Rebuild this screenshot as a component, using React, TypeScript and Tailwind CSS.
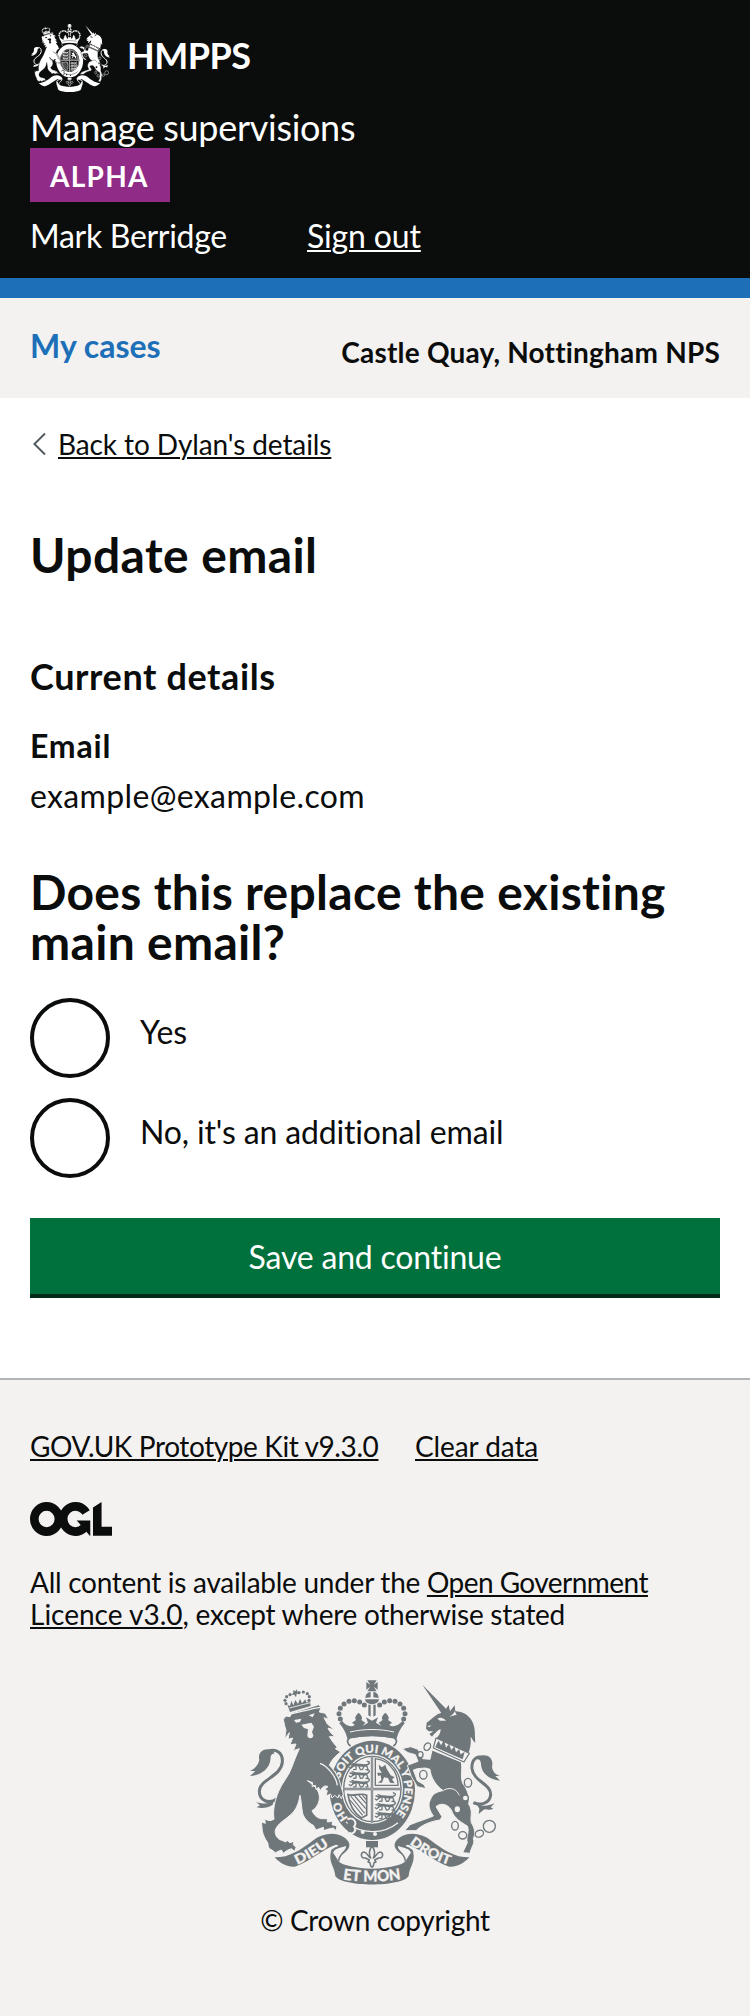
import React from "react";

type CrestProps = { ink: string; ground: string; motto: boolean; className: string; viewBox: string };

const LION =
  "M130 148 L138 138 L150 140 C152 130 160 126 172 124 L236 104 L243 112 L238 126 L256 130 L266 148 L252 143 L262 162 L284 180 L264 174 C268 184 274 192 286 200 L268 200 L280 218 L292 232 L286 236 L302 246 C288 256 274 270 268 286 C284 302 298 326 301 342 L310 372 L304 386 L297 374 L294 384 L284 376 L276 384 L272 372 L258 378 L262 362 L254 358 L264 350 C254 344 246 352 240 362 L236 352 L228 358 L226 346 L216 350 L218 338 L202 332 C222 346 240 360 238 386 C236 404 226 416 216 422 C222 436 232 444 244 446 L262 446 L262 456 L278 454 L276 464 L291 468 L288 482 L280 474 L262 478 L252 482 L250 472 L228 480 L220 466 C208 460 192 446 188 430 C184 410 184 392 180 376 C176 398 170 420 150 436 C134 450 112 462 106 480 C104 494 110 502 118 508 L138 516 L140 510 L150 518 L162 514 L160 524 L168 532 L164 544 L154 536 L140 542 L130 550 L124 540 L106 548 L96 540 C84 536 84 526 84 520 C72 502 66 488 66 472 L64 456 L76 460 L74 448 L90 452 L102 448 C98 420 104 392 116 364 C126 338 146 320 156 290 C164 268 172 250 178 236 L160 242 L168 222 L150 224 L158 204 L144 208 L148 188 L134 206 L138 180 L134 168 Z";

const UNICORN =
  "M560 158 C574 148 584 138 594 132 L612 126 L626 104 L630 124 L644 106 L646 124 C672 124 692 140 700 162 C706 178 704 192 706 218 C698 212 696 204 692 200 C694 222 690 238 684 252 L588 206 C596 198 602 190 602 178 C592 180 586 190 576 200 L568 192 L580 184 L566 184 L558 176 Z";

const UNICORN_BODY =
  "M576 240 L664 276 C668 300 660 318 668 340 C684 360 690 384 686 402 C700 424 690 438 694 458 C706 476 706 494 700 506 C706 520 694 530 690 550 L668 548 L682 518 C676 502 690 486 682 468 C666 458 642 446 634 420 C620 398 598 400 588 410 L606 440 L600 450 C572 454 546 464 528 482 L494 482 L510 464 C536 454 562 446 580 438 C568 420 562 402 572 388 C576 372 592 364 610 362 C588 348 572 322 570 298 L556 294 L532 296 L520 300 L532 332 L552 344 L558 356 L532 350 L514 320 L502 286 L534 274 L526 254 L504 248 L486 236 L512 230 L534 238 L548 266 L570 268 Z";

function Bead({ x, y, r, fill }: { x: number; y: number; r: number; fill: string }) {
  return <circle cx={x} cy={y} r={r} fill={fill} />;
}

const ARCH_BEADS = [
  [301, 147], [297, 131], [301, 115], [312, 102], [327, 94], [343, 92], [359, 96], [373, 105],
];

const SMALL_CROWN_BEADS = [
  [138, 101], [135, 91], [140, 80], [150, 74], [177, 68], [190, 66], [202, 71], [208, 80], [207, 91],
];

function PassantLions({ x, y, ink }: { x: number; y: number; ink: string }) {
  return (
    <g transform={`translate(${x} ${y})`} fill="none" stroke={ink} strokeLinecap="round" strokeLinejoin="round">
      {[0, 26, 52].map((dy) => (
        <g key={dy} transform={`translate(0 ${dy})`}>
          <path strokeWidth="8" d="M14 7 C26 2 38 10 52 7" />
          <path strokeWidth="4" d="M14 7 L4 4 M14 10 L6 16 L2 13 M22 10 L22 19 L15 20 M46 10 L42 19 L35 20 M54 8 L58 19 L52 20 M55 5 C66 2 62 -6 56 -5 M10 0 L18 3 M31 10 L34 17" />
        </g>
      ))}
    </g>
  );
}

function Crest({ ink, ground, motto, className, viewBox }: CrestProps) {
  const lettering = {
    fill: ground,
    stroke: ground,
    strokeWidth: 0.8,
    fontFamily: "Lato, sans-serif",
    fontWeight: 900,
  };
  return (
    <svg className={className} viewBox={viewBox} preserveAspectRatio="none" role="img">
      {/* royal crown */}
      <g fill={ink}>
        <path d="M391 44 L382 31 L410 31 L401 44 L413 36 L413 59 L401 50 L410 64 L382 64 L391 50 L379 59 L379 36 Z" />
        <path d="M376 84 A20 20 0 0 1 392 65 L392 82 Z M400 65 A20 20 0 0 1 416 84 L400 82 Z M375 88 L417 88 A21 15 0 0 1 375 88 Z" />
        <path d="M385 104 L392 104 L392 140 L385 136 Z M400 104 L407 104 L407 136 L400 140 Z" />
        {ARCH_BEADS.map(([x, y]) => (
          <React.Fragment key={`${x}-${y}`}>
            <Bead x={x} y={y} r={7.5} fill={ink} />
            <Bead x={792 - x} y={y} r={7.5} fill={ink} />
          </React.Fragment>
        ))}
        <path d="M306 152 C316 166 334 174 344 164 L336 158 L348 150 C342 142 350 134 356 128 C362 134 370 142 364 150 L376 158 L368 168 L384 158 L378 142 L396 152 L414 142 L408 158 L424 168 L416 158 L428 150 C422 142 430 134 436 128 C442 134 450 142 444 150 L456 158 L448 164 C458 174 476 166 488 152 L494 160 C482 174 474 188 470 206 C424 196 368 196 322 206 C318 188 310 174 298 160 Z" />
      </g>
      <path d="M330 203 C372 193 420 193 462 203 C474 210 470 222 460 228 M332 228 C322 222 318 210 330 203" fill="none" stroke={ink} strokeWidth="5" />
      <path d="M330 186 C372 176 420 176 462 186" fill="none" stroke={ground} strokeWidth="3" />

      {/* garter and shield */}
      <ellipse cx="397" cy="361" rx="128" ry="149" fill={ink} />
      <ellipse cx="397" cy="357" rx="92" ry="104" fill={ground} />
      <ellipse cx="397" cy="357" rx="86" ry="98" fill="none" stroke={ink} strokeWidth="4" />
      <path d="M396 257 V458 M309 357 H485" stroke={ink} strokeWidth="7" />
      <path d="M396 257 V458 M309 357 H485" stroke={ground} strokeWidth="1.5" />
      <PassantLions x={326} y={279} ink={ink} />
      <PassantLions x={404} y={374} ink={ink} />
      <path d="M406 266 Q442 270 462 302 Q474 322 474 346 L406 346 Z" fill="none" stroke={ink} strokeWidth="4" />
      <path d="M416 284 L426 292 L436 284 L440 296 L452 316 L464 322 L456 328 L464 340 L450 338 L444 324 L432 322 L426 338 L414 338 L424 330 L422 316 L414 318 L412 308 L426 308 L418 298 Z" fill={ink} />
      <path d="M324 374 C346 380 362 366 380 376 L380 436 L364 444 C344 430 328 404 324 374 Z" fill="none" stroke={ink} strokeWidth="5" />
      <path d="M332 378 L374 430 M344 378 L377 416 M356 375 L378 400 M330 390 L368 436 M366 374 L378 388" stroke={ink} strokeWidth="3.5" />

      {/* garter buckle and strap */}
      <path d="M318 456 C364 494 430 494 474 458" fill="none" stroke={ground} strokeWidth="4" />
      <path d="M322 448 C342 440 352 458 342 470 C352 480 340 496 326 488" fill={ink} stroke={ground} strokeWidth="6" />
      <circle cx="368" cy="486" r="6" fill={ground} />
      <circle cx="405" cy="492" r="6" fill={ground} />
      {motto && (
        <>
          <path id="garter-left" d="M325 444 A101 112 0 0 1 299 384" fill="none" />
          <path id="garter" d="M300 326 A99 110 0 1 1 440 456" fill="none" />
          <text {...lettering} fontSize="33">
            <textPath href="#garter-left" textLength="56" lengthAdjust="spacingAndGlyphs">HO</textPath>
          </text>
          <text {...lettering} fontSize="33">
            <textPath href="#garter" textLength="376" lengthAdjust="spacingAndGlyphs">SOIT QUI MAL Y PENSE</textPath>
          </text>
        </>
      )}

      {/* lion */}
      <path
        d="M112 386 C86 404 58 392 58 364 C58 328 124 320 127 276 C129 248 108 234 84 244"
        fill="none"
        stroke={ink}
        strokeWidth="9"
      />
      <path d="M96 240 C72 232 52 246 58 270 C54 288 42 298 30 302 L46 304 L30 318 C60 316 84 300 90 276 C94 262 88 254 104 250 Z" fill={ink} />
      <path d="M104 384 C92 402 74 404 48 396 L60 406 L50 412 C66 416 84 414 98 404 Z" fill={ink} />
      <path d={LION} fill={ink} stroke={ground} strokeWidth="3" />
      <path d="M162 150 L184 146 L180 156 L168 158 Z M206 136 L224 130 L218 142 Z M184 164 L214 158 L222 170 L216 186 L220 196 C220 208 202 208 202 196 L204 178 L192 174 Z" fill={ground} />
      <path d="M150 132 C176 128 210 116 242 112" stroke={ground} strokeWidth="4" fill="none" />
      <path d="M240 280 C262 288 288 318 292 346" stroke={ground} strokeWidth="4" fill="none" />
      <path d="M142 104 L150 108 L154 92 L160 106 L166 90 L174 102 L180 86 L186 100 L196 88 L200 98 L210 92 L212 108 L150 126 Z" fill={ink} />
      <path d="M148 114 L211 98" stroke={ground} strokeWidth="2.5" />
      <path d="M160 60 L166 64 L171 58 L172 66 L178 68 L170 72 L168 82 L163 74 L154 74 L160 68 Z" fill={ink} />
      {SMALL_CROWN_BEADS.map(([x, y]) => (
        <Bead key={`${x}-${y}`} x={x} y={y} r={4.8} fill={ink} />
      ))}

      {/* unicorn */}
      <path d="M547 44 L624 122 L606 132 Z" fill={ink} />
      <path
        d="M700 398 C722 408 750 400 752 374 C754 342 700 334 696 296 C694 264 714 254 738 266"
        fill="none"
        stroke={ink}
        strokeWidth="9"
      />
      <path d="M718 258 C744 250 762 266 756 290 C758 306 768 314 780 318 L766 318 L780 332 C752 330 728 312 724 290 C722 278 724 270 712 268 Z" fill={ink} />
      <path d="M704 392 C716 408 736 412 764 400 L752 412 L760 416 C744 424 738 414 730 420 L716 432 L718 416 Z" fill={ink} />
      <path d={UNICORN_BODY} fill={ink} stroke={ground} strokeWidth="3" />
      <path d={UNICORN} fill={ink} />
      <path d="M592 146 C604 140 612 146 618 152 L600 152 Z M628 140 C636 136 642 130 644 124 L650 134 Z M562 168 L574 166 L568 172 Z" fill={ground} />
      <path d="M588 204 L688 250 L672 276 L580 234 Z" fill={ground} stroke={ink} strokeWidth="3.5" strokeLinejoin="round" />
      <path d="M590 222 L596 212 L603 226 L610 214 L613 214 L618 233 L627 221 L634 240 L643 229 L648 247 L658 237 L661 253 L674 246 L668 268 L586 232 Z" fill={ink} />
      <path d="M612 360 C634 350 650 358 658 376" fill="none" stroke={ground} strokeWidth="3" />

      {/* chain */}
      <g fill={ground} stroke={ink} strokeWidth="4">
        <ellipse cx="562" cy="230" rx="9" ry="12" transform="rotate(30 562 230)" />
        <ellipse cx="541" cy="254" rx="8" ry="9" />
        <ellipse cx="550" cy="314" rx="11" ry="13" />
        <ellipse cx="684" cy="338" rx="11" ry="13" />
        <ellipse cx="676" cy="384" rx="9" ry="9" />
        <ellipse cx="652" cy="418" rx="10" ry="11" />
        <ellipse cx="645" cy="467" rx="10" ry="13" />
        <ellipse cx="668" cy="496" rx="12" ry="11" />
        <ellipse cx="718" cy="491" rx="13" ry="10" transform="rotate(-25 718 491)" />
        <circle cx="748" cy="469" r="18" />
      </g>

      {/* fleur-de-lis */}
      <path d="M378 513 H414 V532 H378 Z" fill={ink} />
      <path
        d="M396 528 C384 544 388 556 392 564 C384 562 382 546 372 546 C360 548 362 566 376 564 L388 570 L384 576 L390 578 L392 588 L396 592 L400 588 L402 578 L408 576 L404 570 L416 564 C430 566 432 548 420 546 C410 546 408 562 400 564 C404 556 408 544 396 528 Z"
        fill={ground}
        stroke={ink}
        strokeWidth="4.5"
        strokeLinejoin="round"
      />

      {/* ribbon */}
      <path d="M104 562 C150 562 180 540 218 512 C254 484 304 484 326 516 C336 538 312 548 298 560 L292 574 C278 560 268 552 274 540 C286 528 306 528 288 524 C252 534 210 576 164 590 C144 592 122 582 104 562 Z" fill={ink} />
      <path d="M688 562 C642 562 612 540 574 512 C538 484 488 484 466 516 C456 538 480 548 494 560 L500 574 C514 560 524 552 518 540 C506 528 486 528 504 524 C540 534 582 576 628 590 C648 592 670 582 688 562 Z" fill={ink} />
      <path d="M278 546 C284 528 312 532 320 524 C326 544 296 548 296 574 M514 546 C508 528 480 532 472 524 C466 544 496 548 496 574" fill={ground} stroke={ink} strokeWidth="4.5" />
      <path d="M272 548 C284 566 298 580 320 586 C370 600 422 600 472 586 C494 580 508 566 520 548 C526 576 508 592 506 618 C486 652 306 652 286 618 C284 592 266 576 272 548 Z" fill={ink} />
      {motto && (
        <>
          <path id="dieu" d="M172 584 Q222 562 276 520" fill="none" />
          <path id="mon" d="M308 628 Q396 642 486 627" fill="none" />
          <path id="droit" d="M508 521 Q564 565 630 585" fill="none" />
          <text {...lettering} fontSize="40"><textPath href="#dieu" textLength="112" lengthAdjust="spacingAndGlyphs">DIEU</textPath></text>
          <text {...lettering} fontSize="46"><textPath href="#mon" textLength="176" lengthAdjust="spacingAndGlyphs">ET MON</textPath></text>
          <text {...lettering} fontSize="40"><textPath href="#droit" textLength="136" lengthAdjust="spacingAndGlyphs">DROIT</textPath></text>
        </>
      )}
    </svg>
  );
}

function LicenceLogo() {
  return (
    <svg className="block h-[34px] w-[82px]" viewBox="0 0 483 196" preserveAspectRatio="none" fill="#0b0c0c" role="img">
      <g fill="none" stroke="#0b0c0c" strokeWidth="50.5">
        <circle cx="97.8" cy="97.8" r="72.5" />
        <circle cx="268" cy="97.8" r="72.5" strokeDasharray="356 455.5" transform="rotate(46 268 97.8)" />
      </g>
      <polygon points="275,106 355,106 355,194 352,194 299,133" />
      <polygon points="371,32 421.5,0 421.5,143 483,143 483,194 371,194" />
    </svg>
  );
}

const link = "underline decoration-2 underline-offset-[2px]";

function Radio({ label, spacing }: { label: string; spacing: string }) {
  return (
    <label className="flex h-20">
      <input type="radio" name="replace" className="size-20 shrink-0 appearance-none rounded-full border-4 border-[#0b0c0c]" />
      <span className={`ml-[30px] mt-[14px] text-[32px] leading-[40px] ${spacing}`}>{label}</span>
    </label>
  );
}

export default function App() {
  return (
    <div className="flex min-h-[2016px] w-[750px] flex-col bg-white font-['Lato',sans-serif] text-[#0b0c0c]">
      <header className="h-[298px] border-b-[20px] border-[#1d70b8] bg-[#0b0c0c] px-[30px] pt-6 text-white">
        <div className="flex h-[83px]">
          <Crest
            className="ml-px block h-[68px] w-[79px]"
            viewBox="30 30 750 612"
            ink="#ffffff"
            ground="#0b0c0c"
            motto={false}
          />
          <span className="ml-[17px] mt-[11px] text-[36px] leading-[40px] font-bold tracking-[-0.5px]">HMPPS</span>
        </div>
        <div className="text-[36px] leading-[40px] tracking-[-0.3px]">Manage supervisions</div>
        <div className="mt-px h-[54px] w-[140px] bg-[#912b88] pl-5 text-[28px] leading-[56px] font-bold tracking-[1.3px]">ALPHA</div>
        <div className="mt-[14px] flex text-[32px] leading-[40px]">
          <span className="w-[277px] tracking-[-0.3px]">Mark Berridge</span>
          <a href="#" className={`${link} tracking-[-0.15px]`}>Sign out</a>
        </div>
      </header>

      <nav className="flex h-[100px] justify-between bg-[#f3f2f1] px-[30px]">
        <a href="#" className="mt-[28px] text-[32px] leading-[40px] font-bold text-[#1d70b8]">My cases</a>
        <span className="mt-[34px] text-[28px] leading-[40px] font-bold tracking-[0.2px]">Castle Quay, Nottingham NPS</span>
      </nav>

      <main className="flex h-[980px] flex-col px-[30px] pt-[26px]">
        <div className="flex items-center">
          <svg className="ml-[3px] h-[22px] w-[13px]" viewBox="0 0 13 22" fill="none" stroke="#505a5f" strokeWidth="2">
            <path d="M12 0.5 L1.4 11 L12 21.5" />
          </svg>
          <a href="#" className={`${link} ml-3 text-[28px] leading-[40px] tracking-[-0.1px]`}>Back to Dylan's details</a>
        </div>
        <h1 className="mt-[66px] text-[48px] leading-[50px] font-bold tracking-[0.4px]">Update email</h1>
        <h2 className="mt-[76px] text-[36px] leading-[40px] font-bold tracking-[0.6px]">Current details</h2>
        <h3 className="mt-[30px] text-[32px] leading-[40px] font-bold tracking-[0.8px]">Email</h3>
        <p className="mt-[10px] text-[32px] leading-[40px] tracking-[0.35px]">example@example.com</p>
        <h1 className="mt-[51px] text-[48px] leading-[50px] font-bold tracking-[0.3px]">Does this replace the existing main email?</h1>
        <div className="mt-[31px] flex flex-col gap-5">
          <Radio label="Yes" spacing="tracking-normal" />
          <Radio label="No, it's an additional email" spacing="tracking-[-0.15px]" />
        </div>
        <button className="mt-10 h-20 shrink-0 border-b-4 border-[#002d18] bg-[#00703c] pt-[2px] text-[32px] leading-[40px] tracking-[-0.2px] text-white">
          Save and continue
        </button>
      </main>

      <footer className="flex h-[638px] flex-col border-t-2 border-[#b1b4b6] bg-[#f3f2f1] px-[30px] pt-[46px] text-[28px]">
        <div className="flex leading-[40px]">
          <a href="#" className={`${link} w-[349px] whitespace-nowrap tracking-[-0.4px]`}>GOV.UK Prototype Kit v9.3.0</a>
          <a href="#" className={`${link} ml-9 tracking-[-0.1px]`}>Clear data</a>
        </div>
        <div className="mt-[36px]">
          <LicenceLogo />
        </div>
        <p className="mt-[30px] leading-[32px] tracking-[-0.27px]">
          All content is available under the{" "}
          <a href="#" className={link}>
            <span className="tracking-[-0.54px]">Open Government</span>
            <br />
            <span className="tracking-normal">Licence v3.0</span>
          </a>
          , except where otherwise stated
        </p>
        <Crest
          className="mt-[40px] block h-[220px] w-[270px] self-center"
          viewBox="0 0 810 660"
          ink="#6f777b"
          ground="#f3f2f1"
          motto
        />
        <p className="mt-[10px] text-center leading-[40px] tracking-[-0.3px]">© Crown copyright</p>
      </footer>
    </div>
  );
}
